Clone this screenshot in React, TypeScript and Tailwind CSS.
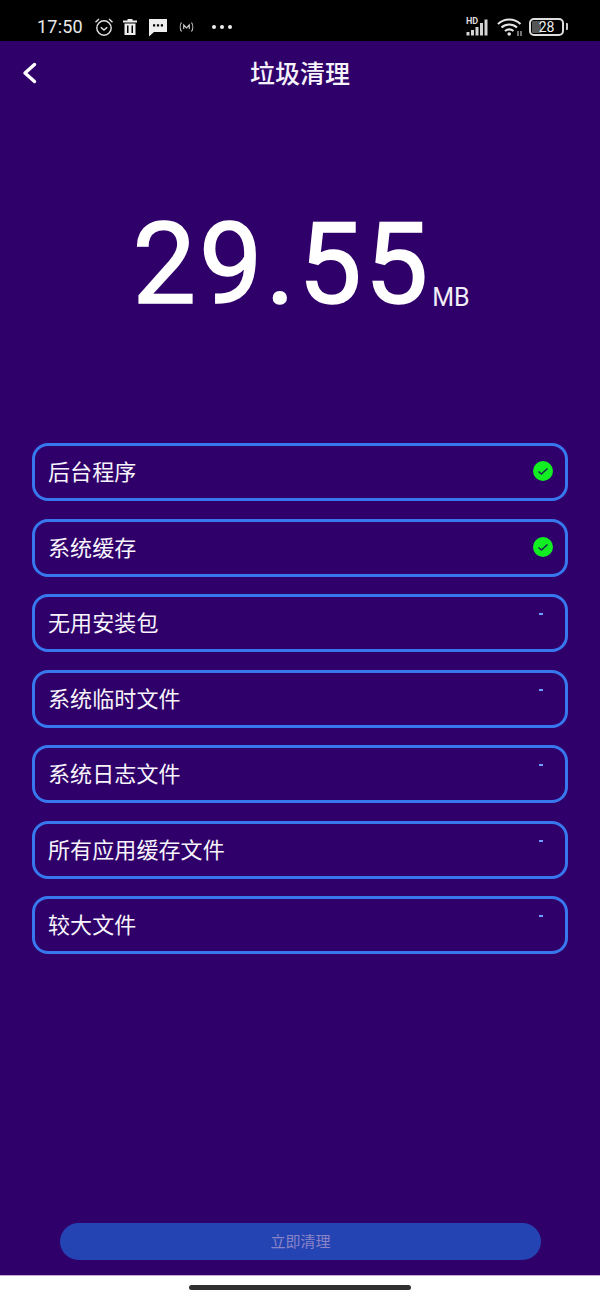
import React from "react";

const CJK = { fontFamily: "Roboto, 'Noto Sans CJK SC', sans-serif" };

const items: [string, boolean, string][] = [
  ["后台程序", true, "mb-[18px]"],
  ["系统缓存", true, "mb-[17px]"],
  ["无用安装包", false, "mb-[18px]"],
  ["系统临时文件", false, "mb-[17px]"],
  ["系统日志文件", false, "mb-[18px]"],
  ["所有应用缓存文件", false, "mb-[17px]"],
  ["较大文件", false, ""],
];

function StatusLeft() {
  return (
    <div className="flex items-center">
      <span className="ml-[37px] w-[48px] text-[18px] leading-none tracking-[0.2px] text-[#e8e8e8]">17:50</span>
      <svg className="ml-[9px]" width="20" height="20" viewBox="0 0 20 20" fill="none" stroke="#e4e4e4" strokeWidth="1.4">
        <circle cx="10" cy="11" r="7.2" />
        <path d="M6.8 10.2 10 13l3.2-2.8" />
        <path d="M1.5 5.2 5 2M18.5 5.2 15 2" />
      </svg>
      <svg className="ml-[8px]" width="16" height="18" viewBox="0 0 16 18" fill="#eeeeee">
        <path d="M5.5 1h5v1.500H15v2H1v-2h4.500z" />
        <path d="M2.500 5.500h11V17h-11zM5 7.500V15h1.500V7.500zM9.500 7.500V15H11V7.500z" fillRule="evenodd" />
      </svg>
      <svg className="ml-[10px] mt-[2px]" width="20" height="19" viewBox="0 0 20 19" fill="#eeeeee">
        <path fillRule="evenodd" d="M1 1h18v13H6l-5 4.500zM5 6.200v2.200h2.200V6.200zM8.900 6.200v2.200h2.200V6.200zM12.800 6.200v2.200H15V6.200z" />
      </svg>
      <svg className="ml-[11px]" width="15" height="12" viewBox="0 0 15 12" fill="none" stroke="#cfcfcf" strokeWidth="1.100">
        <path d="M2.500 1.500C.8 4 .8 8 2.500 10.500M12.500 1.500c1.700 2.500 1.700 6.500 0 9" />
        <path d="M4.700 8V4l2.800 3 2.800-3v4" />
      </svg>
      <div className="ml-[18px] flex gap-[4px]">
        <span className="size-[4px] rounded-full bg-[#eeeeee]" />
        <span className="size-[4px] rounded-full bg-[#eeeeee]" />
        <span className="size-[4px] rounded-full bg-[#eeeeee]" />
      </div>
    </div>
  );
}

function StatusRight() {
  return (
    <div className="flex items-center">
      <div className="relative h-[18px] w-[24px]">
        <span className="absolute left-0 top-[-1px] text-[9px] font-bold leading-[9px] text-[#dddddd]">HD</span>
        <svg className="absolute bottom-0 left-0" width="24" height="17" viewBox="0 0 24 17" fill="#d4d4d4">
          <rect x="0.500" y="13" width="3" height="3.500" />
          <rect x="5" y="11" width="3" height="5.500" />
          <rect x="9.500" y="8" width="3" height="8.500" />
          <rect x="14" y="4" width="3" height="12.500" />
          <rect x="18.500" y="0.500" width="3" height="16" />
        </svg>
      </div>
      <svg className="ml-[7px]" width="26" height="20" viewBox="0 0 26 20" fill="none" stroke="#e6e6e6" strokeWidth="2.200">
        <path d="M1 7c6.500-6 16-6 22.500 0" />
        <path d="M4.500 10.500c4.500-4 11-4 15.500 0" />
        <path d="M8 14c2.500-2 6-2 8.500 0" />
        <circle cx="12.200" cy="17" r="1.800" fill="#e6e6e6" stroke="none" />
        <path d="M21 19v-5M24 19v-5" strokeWidth="1" />
      </svg>
      <div className="relative ml-[6px] flex h-[18px] w-[35px] items-center justify-center rounded-[5px] border-2 border-[#dedede]">
        <span className="absolute inset-y-[1px] left-[1px] w-[9px] rounded-[1px] bg-[#555555]" />
        <span className="relative text-[14px] leading-none text-[#eeeeee]">28</span>
      </div>
      <span className="ml-[2px] h-[7px] w-[2px] rounded-r-[1px] bg-[#cccccc]" />
    </div>
  );
}

function Check() {
  return (
    <svg width="20" height="20" viewBox="0 0 20 20">
      <circle cx="10" cy="10" r="10" fill="#11ee22" />
      <path d="M5.500 10.500 8.500 13 14.500 7.500" fill="none" stroke="#1a2c50" strokeWidth="1.600" />
    </svg>
  );
}

export default function App() {
  return (
    <div className="flex h-[1300px] w-[600px] flex-col overflow-hidden bg-white" style={CJK}>
      <div className="flex h-[41px] items-center justify-between bg-black pr-[32px] pt-[12px]">
        <StatusLeft />
        <StatusRight />
      </div>

      <div className="flex h-[1234px] flex-col bg-[#2f006a] px-[32px]">
        <div className="relative flex h-[66px] items-center justify-center">
          <svg className="absolute left-[-10px] top-[21px]" width="16" height="22" viewBox="0 0 16 22" fill="none" stroke="#ffffff" strokeWidth="3.400" strokeLinecap="round" strokeLinejoin="round">
            <path d="M12.500 2.500 3 11l9.500 8.500" />
          </svg>
          <h1 className="text-[25px] font-medium leading-none text-[#f6f2fa]">垃圾清理</h1>
        </div>

        <div className="mt-[98px] flex h-[120px] items-end justify-center pl-[2px]">
          <span className="text-[113px] leading-[120px] tracking-[3px] text-white [-webkit-text-stroke:1.5px_white]">29.55</span>
          <span className="mb-[15px] ml-[1px] text-[25px] leading-none text-[#f2eef8]">MB</span>
        </div>

        <div className="mt-[118px] flex flex-col">
          {items.map(([label, done, gap]) => (
            <div key={label} className={`${gap} relative flex h-[58px] items-center rounded-[16px] border-[3px] border-[#3878ee] pl-[13px]`}>
              <span className="pt-[2px] text-[22px] leading-none tracking-[0.1px] text-[#f8f4fb]">{label}</span>
              {done ? (
                <span className="absolute right-[12px] top-[15px]"><Check /></span>
              ) : (
                <span className="absolute right-[22px] top-[16px] h-[2px] w-[4px] bg-[#6f9cff]" />
              )}
            </div>
          ))}
        </div>

        <div className="ml-[28px] mr-[27px] mt-[269px] flex h-[37px] items-center justify-center rounded-full bg-[#2544b4]">
          <span className="pt-[2px] text-[15px] leading-none text-[#8a83c6]">立即清理</span>
        </div>
      </div>

      <div className="flex flex-1 justify-center border-t border-[#c9a6d6] pt-[9px]">
        <div className="h-[5px] w-[222px] rounded-full bg-[#303030]" />
      </div>
    </div>
  );
}
